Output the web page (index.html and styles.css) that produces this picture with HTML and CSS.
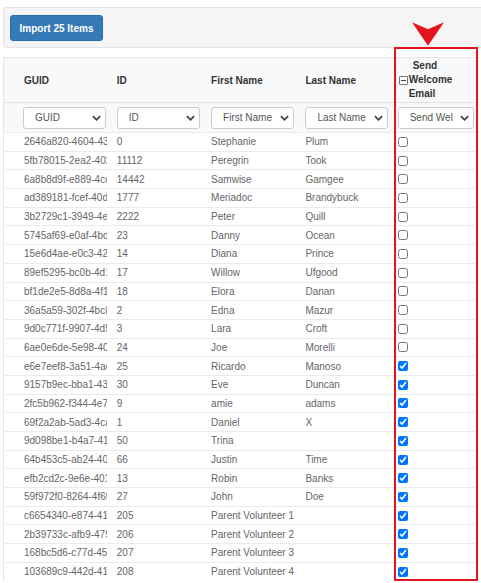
FILE: index.html
```html
<!DOCTYPE html>
<html lang="en">
<head>
    <meta charset="UTF-8">
    <meta name="viewport" content="width=device-width, initial-scale=1.0">
    <title>Import Items</title>
    <link rel="stylesheet" href="styles.css">
</head>
<body>
    <div class="page">
        <div class="toolbar">
            <button class="btn-import">Import 25 Items</button>
        </div>

        <div class="grid-wrap">
            <table class="grid">
                <colgroup>
                    <col class="c-guid"><col class="c-id"><col class="c-first"><col class="c-last"><col class="c-send">
                </colgroup>
                <thead>
                    <tr class="head-row">
                        <th>GUID</th>
                        <th>ID</th>
                        <th>First Name</th>
                        <th>Last Name</th>
                        <th>
                            <div class="send-head">
                                <span class="minus-box"></span>
                                <span class="send-text">
                                    <span class="l1">Send</span>
                                    <span>Welcome</span>
                                    <span>Email</span>
                                </span>
                            </div>
                        </th>
                    </tr>
                    <tr class="filter-row">
                        <td><div class="pick"><select><option>GUID</option></select><svg viewBox="0 0 10 6"><polyline points="1,1 5,5 9,1"/></svg></div></td>
                        <td><div class="pick"><select><option>ID</option></select><svg viewBox="0 0 10 6"><polyline points="1,1 5,5 9,1"/></svg></div></td>
                        <td><div class="pick"><select><option>First Name</option></select><svg viewBox="0 0 10 6"><polyline points="1,1 5,5 9,1"/></svg></div></td>
                        <td><div class="pick"><select><option>Last Name</option></select><svg viewBox="0 0 10 6"><polyline points="1,1 5,5 9,1"/></svg></div></td>
                        <td><div class="pick small"><select><option>Send Welcome Email</option></select><svg viewBox="0 0 10 6"><polyline points="1,1 5,5 9,1"/></svg></div></td>
                    </tr>
                </thead>
                <tbody id="rows"></tbody>
            </table>

            <!-- highlight over the last column -->
            <div class="highlight"></div>
            <svg class="arrow" viewBox="0 0 34 24"><polygon points="0,0 16.5,7 33,0 16.5,24"/></svg>
        </div>
    </div>

    <script>
        const people = [
            ['2646a820-4604-438', '0', 'Stephanie', 'Plum', false],
            ['5fb78015-2ea2-4029', '11112', 'Peregrin', 'Took', false],
            ['6a8b8d9f-e889-4cc0', '14442', 'Samwise', 'Gamgee', false],
            ['ad389181-fcef-40d2', '1777', 'Meriadoc', 'Brandybuck', false],
            ['3b2729c1-3949-4e0', '2222', 'Peter', 'Quill', false],
            ['5745af69-e0af-4bd7', '23', 'Danny', 'Ocean', false],
            ['15e6d4ae-e0c3-421', '14', 'Diana', 'Prince', false],
            ['89ef5295-bc0b-4d19', '17', 'Willow', 'Ufgood', false],
            ['bf1de2e5-8d8a-4f1c', '18', 'Elora', 'Danan', false],
            ['36a5a59-302f-4bc8', '2', 'Edna', 'Mazur', false],
            ['9d0c771f-9907-4d5b', '3', 'Lara', 'Croft', false],
            ['6ae0e6de-5e98-403', '24', 'Joe', 'Morelli', false],
            ['e6e7eef8-3a51-4ac7', '25', 'Ricardo', 'Manoso', true],
            ['9157b9ec-bba1-438', '30', 'Eve', 'Duncan', true],
            ['2fc5b962-f344-4e7d', '9', 'amie', 'adams', true],
            ['69f2a2ab-5ad3-4ca1', '1', 'Daniel', 'X', true],
            ['9d098be1-b4a7-410', '50', 'Trina', '', true],
            ['64b453c5-ab24-409', '66', 'Justin', 'Time', true],
            ['efb2cd2c-9e6e-4015', '13', 'Robin', 'Banks', true],
            ['59f972f0-8264-4f6f', '27', 'John', 'Doe', true],
            ['c6654340-e874-41a', '205', 'Parent Volunteer 1', '', true],
            ['2b39733c-afb9-4796', '206', 'Parent Volunteer 2', '', true],
            ['168bc5d6-c77d-45e', '207', 'Parent Volunteer 3', '', true],
            ['103689c9-442d-41f', '208', 'Parent Volunteer 4', '', true]
        ];

        const tbody = document.getElementById('rows');
        people.forEach(p => {
            tbody.innerHTML += `<tr><td>${p[0]}</td><td>${p[1]}</td><td class="wide">${p[2]}</td><td>${p[3]}</td>` +
                `<td><input type="checkbox" ${p[4] ? 'checked' : ''}></td></tr>`;
        });
    </script>
</body>
</html>
```

FILE: styles.css
```css
body {
    margin: 0;
    overflow: hidden;
    font-family: 'Liberation Sans', Arial, sans-serif;
    color: #333;
    background: #fff;
}
.page {
    padding: 7px 0 0 3px;
}
.toolbar {
    width: 500px;
    padding: 7px 6px 6px;
    background: #f5f5f5;
    border: 1px solid #e3e3e3;
    border-radius: 3px 0 0 3px;
}
.btn-import {
    width: 93px;
    height: 26px;
    padding: 0;
    font-family: inherit;
    font-size: 10px;
    font-weight: bold;
    color: #fff;
    background: #337ab7;
    border: 1px solid #2e6da4;
    border-radius: 3px;
}
.grid-wrap {
    position: relative;
    margin-top: 9px;
}
.grid {
    width: 474px;
    table-layout: fixed;
    border-collapse: collapse;
    border-left: 1px solid #e6e6e6;
    border-top: 1px solid #e6e6e6;
    font-size: 10px;
}
.c-guid { width: 103px; }
.c-id, .c-first, .c-last { width: 94px; }
.c-send { width: 87px; }

.grid th, .grid td {
    padding: 0 0 0 10px;
    text-align: left;
    white-space: nowrap;
    overflow: hidden;
}
.grid th:first-child, .grid td:first-child {
    padding-left: 20px;
}
.grid th:last-child, .grid td:last-child {
    padding-left: 9px;
}
.grid td.wide {
    overflow: visible;
}
.head-row {
    height: 45px;
    background: #f9f9f9;
}
.head-row th {
    font-weight: bold;
    color: #333;
}
.send-head {
    display: flex;
    align-items: center;
}
.minus-box {
    position: relative;
    width: 7px;
    height: 7px;
    margin-right: 1px;
    border: 1px solid #777;
    border-radius: 1px;
    background: #fff;
}
.minus-box::after {
    content: '';
    position: absolute;
    left: 1px;
    right: 1px;
    top: 3px;
    height: 1px;
    background: #444;
}
.send-text span {
    display: block;
    line-height: 14px;
}
.send-text .l1 {
    padding-left: 4px;
}
.filter-row {
    height: 30px;
    background: #f9f9f9;
    border-top: 1px solid #e3e3e3;
}
.filter-row td:first-child .pick {
    margin-left: -1px;
}
.pick {
    position: relative;
    width: 83px;
}
.pick.small {
    width: 76px;
    margin-left: -1px;
}
.pick select {
    appearance: none;
    -webkit-appearance: none;
    width: 100%;
    height: 22px;
    padding: 0 20px 0 11px;
    font-family: inherit;
    font-size: 10px;
    color: #555;
    background: #fff;
    border: 1px solid #ccc;
    border-radius: 3px;
}
.pick svg {
    position: absolute;
    right: 5px;
    top: 8px;
    width: 9px;
    height: 6px;
    fill: none;
    stroke: #444;
    stroke-width: 2;
    pointer-events: none;
}
tbody tr {
    height: 18.7px;
    border-top: 1px solid #ebebeb;
}
tbody td {
    color: #666;
}
tbody input {
    display: block;
    width: 10px;
    height: 10px;
    margin: 0 0 0 -1px;
}
.highlight {
    position: absolute;
    left: 391px;
    top: -10px;
    width: 84px;
    height: 534px;
    border: 2px solid #e3141e;
    box-sizing: border-box;
    pointer-events: none;
}
.arrow {
    position: absolute;
    left: 409px;
    top: -35px;
    width: 33px;
    height: 24px;
    fill: #e3141e;
}
```
